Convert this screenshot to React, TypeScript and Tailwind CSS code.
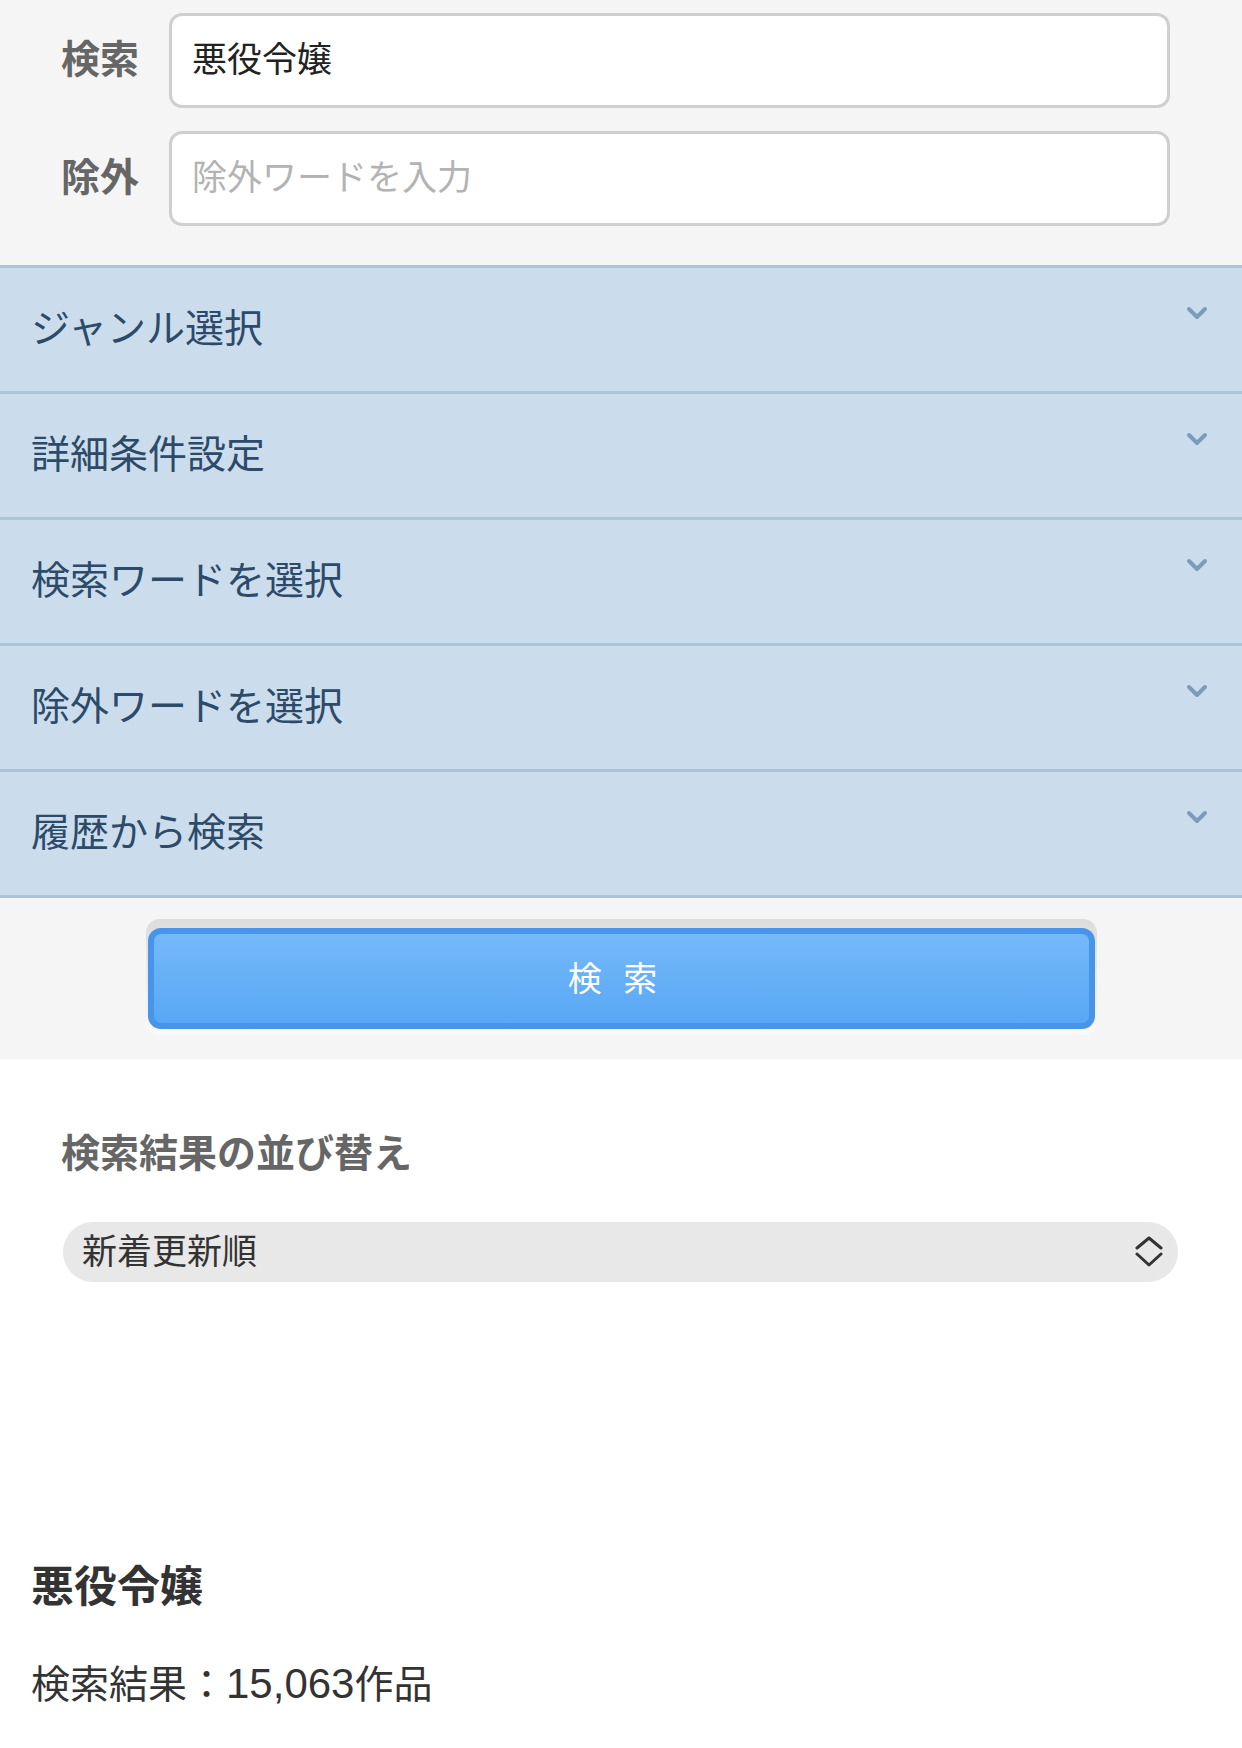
import { useState } from 'react';

const SECTIONS = ['ジャンル選択', '詳細条件設定', '検索ワードを選択', '除外ワードを選択', '履歴から検索'];

const ChevronDown = () => (
  <svg width="22" height="14" viewBox="0 0 22 14" fill="none">
    <path d="M3 3 L11 11 L19 3" stroke="#7b9bb9" strokeWidth="4" strokeLinecap="round" strokeLinejoin="round" />
  </svg>
);

const UpDownIcon = () => (
  <svg width="28" height="32" viewBox="0 0 28 32" fill="none">
    <path d="M2 12 L14 2 L26 12" stroke="#333" strokeWidth="3" strokeLinecap="round" strokeLinejoin="round" />
    <path d="M2 18 L14 29 L26 18" stroke="#333" strokeWidth="3" strokeLinecap="round" strokeLinejoin="round" />
  </svg>
);

export default function App() {
  const [keyword, setKeyword] = useState('悪役令嬢');
  const [exclude, setExclude] = useState('');
  const [sort, setSort] = useState('new');

  return (
    <div className="w-[1242px] min-h-[1748px] bg-white font-['Noto_Sans_CJK_JP','Noto_Sans',sans-serif]">
      {/* 検索フォーム */}
      <div className="bg-[#f5f5f5]">
        <div className="flex flex-col gap-[23px] pt-[13px] pb-[39px] pl-[61px] pr-[72px]">
          <div className="flex items-center">
            <label className="w-[108px] shrink-0 pb-[9px] text-[39px] leading-none font-bold text-[#666]">検索</label>
            <input
              value={keyword}
              onChange={(e) => setKeyword(e.target.value)}
              className="flex-1 h-[95px] bg-white border-[3px] border-[#cfcfcf] rounded-[13px] pl-[20px] pr-[20px] pb-[8px] text-[35px] text-[#222] outline-none"
            />
          </div>
          <div className="flex items-center">
            <label className="w-[108px] shrink-0 pb-[9px] text-[39px] leading-none font-bold text-[#666]">除外</label>
            <input
              value={exclude}
              onChange={(e) => setExclude(e.target.value)}
              placeholder="除外ワードを入力"
              className="flex-1 h-[95px] bg-white border-[3px] border-[#cfcfcf] rounded-[13px] pl-[20px] pr-[20px] pb-[8px] text-[35px] text-[#222] placeholder:text-[#b3b3b3] outline-none"
            />
          </div>
        </div>

        {/* アコーディオン */}
        <div className="border-b-[3px] border-[#aac4da]">
          {SECTIONS.map((s) => (
            <div
              key={s}
              className="flex justify-between h-[126px] border-t-[3px] border-[#aac4da] bg-[#cbdded] pl-[31px] pr-[34px]"
            >
              <span className="self-center -mt-[8px] text-[39px] leading-none text-[#2d4a69]">{s}</span>
              <span className="mt-[38px]">
                <ChevronDown />
              </span>
            </div>
          ))}
        </div>

        <div className="pt-[21px] pb-[24px] flex justify-center">
          <div className="w-[951px] rounded-[14px] bg-[linear-gradient(#dcdcdc,#f9f9f9)] pt-[9px] pb-[6px] px-[2px]">
            <button className="w-full h-[101px] rounded-[13px] border-[6px] border-[#4794ea] bg-[linear-gradient(#75b9f9,#58a7f5)] pb-[4px] pr-[10px] text-white text-[34px] tracking-[7px]">
              検 索
            </button>
          </div>
        </div>
      </div>

      {/* 並び替え */}
      <div className="px-[61px] pt-[68px]">
        <h2 className="text-[39px] leading-[47px] font-bold text-[#666]">検索結果の並び替え</h2>
        <div className="relative mt-[48px] ml-[2px] w-[1115px]">
          <select
            value={sort}
            onChange={(e) => setSort(e.target.value)}
            className="appearance-none w-full h-[60px] rounded-full bg-[#e8e8e8] pl-[19px] pr-[60px] pb-[6px] text-[35px] text-[#333] outline-none"
          >
            <option value="new">新着更新順</option>
            <option value="pop">人気順</option>
          </select>
          <span className="absolute right-[15px] top-[14px] pointer-events-none">
            <UpDownIcon />
          </span>
        </div>
      </div>

      {/* 検索結果 */}
      <div className="px-[31px] pt-[275px]">
        <h1 className="text-[43px] leading-[52px] font-bold text-[#333]">悪役令嬢</h1>
        <p className="mt-[49px] text-[39px] leading-[47px] text-[#333]">
          検索結果：<span className="font-['Liberation_Sans',sans-serif] text-[42px]">15,063</span>作品
        </p>
      </div>
    </div>
  );
}
